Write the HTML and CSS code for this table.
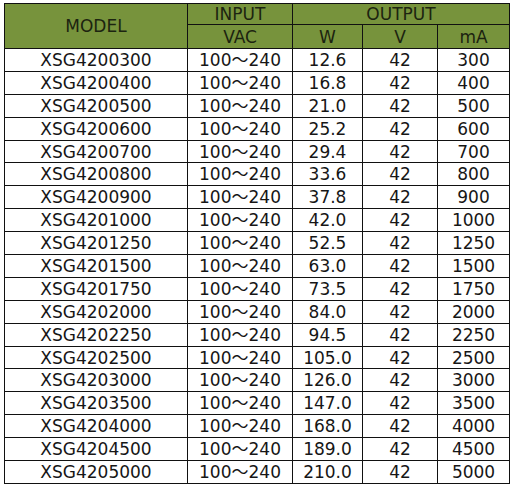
FILE: index.html
```html
<!DOCTYPE html>
<html>
<head>
<meta charset="utf-8">
<link rel="stylesheet" href="styles.css">
</head>
<body>
<table class="spec">
  <colgroup>
    <col class="c-model"><col class="c-in"><col class="c-w"><col class="c-v"><col class="c-ma">
  </colgroup>
  <thead>
    <tr class="h1">
      <th rowspan="2">MODEL</th>
      <th>INPUT</th>
      <th colspan="3">OUTPUT</th>
    </tr>
    <tr class="h2">
      <th>VAC</th>
      <th>W</th>
      <th>V</th>
      <th>mA</th>
    </tr>
  </thead>
  <tbody>
    <tr><td>XSG4200300</td><td>100～240</td><td>12.6</td><td>42</td><td>300</td></tr>
    <tr><td>XSG4200400</td><td>100～240</td><td>16.8</td><td>42</td><td>400</td></tr>
    <tr><td>XSG4200500</td><td>100～240</td><td>21.0</td><td>42</td><td>500</td></tr>
    <tr><td>XSG4200600</td><td>100～240</td><td>25.2</td><td>42</td><td>600</td></tr>
    <tr><td>XSG4200700</td><td>100～240</td><td>29.4</td><td>42</td><td>700</td></tr>
    <tr><td>XSG4200800</td><td>100～240</td><td>33.6</td><td>42</td><td>800</td></tr>
    <tr><td>XSG4200900</td><td>100～240</td><td>37.8</td><td>42</td><td>900</td></tr>
    <tr><td>XSG4201000</td><td>100～240</td><td>42.0</td><td>42</td><td>1000</td></tr>
    <tr><td>XSG4201250</td><td>100～240</td><td>52.5</td><td>42</td><td>1250</td></tr>
    <tr><td>XSG4201500</td><td>100～240</td><td>63.0</td><td>42</td><td>1500</td></tr>
    <tr><td>XSG4201750</td><td>100～240</td><td>73.5</td><td>42</td><td>1750</td></tr>
    <tr><td>XSG4202000</td><td>100～240</td><td>84.0</td><td>42</td><td>2000</td></tr>
    <tr><td>XSG4202250</td><td>100～240</td><td>94.5</td><td>42</td><td>2250</td></tr>
    <tr><td>XSG4202500</td><td>100～240</td><td>105.0</td><td>42</td><td>2500</td></tr>
    <tr><td>XSG4203000</td><td>100～240</td><td>126.0</td><td>42</td><td>3000</td></tr>
    <tr><td>XSG4203500</td><td>100～240</td><td>147.0</td><td>42</td><td>3500</td></tr>
    <tr><td>XSG4204000</td><td>100～240</td><td>168.0</td><td>42</td><td>4000</td></tr>
    <tr><td>XSG4204500</td><td>100～240</td><td>189.0</td><td>42</td><td>4500</td></tr>
    <tr><td>XSG4205000</td><td>100～240</td><td>210.0</td><td>42</td><td>5000</td></tr>
  </tbody>
</table>
</body>
</html>
```
FILE: styles.css
```css
html, body {
  background: #ffffff;
}
body {
  margin: 3px 0 0 4px;
  font-family: "DejaVu Sans", Verdana, "Noto Sans CJK JP", sans-serif;
  font-size: 17px;
  color: #161616;
}
.spec {
  border-collapse: collapse;
  table-layout: fixed;
  width: 505px;
}
.c-model { width: 183px; }
.c-in { width: 105px; }
.c-w { width: 70px; }
.c-v { width: 75px; }
.c-ma { width: 72px; }
.spec th,
.spec td {
  border: 1px solid #111;
  padding: 0;
  text-align: center;
  vertical-align: middle;
  line-height: 20px;
  white-space: nowrap;
}
.spec th {
  background: #77933c;
  color: #1c2410;
  font-weight: normal;
}
.h1 th {
  height: 20px;
}
.h2 th {
  height: 23px;
}
.spec td {
  height: 21.9px;
}
```
